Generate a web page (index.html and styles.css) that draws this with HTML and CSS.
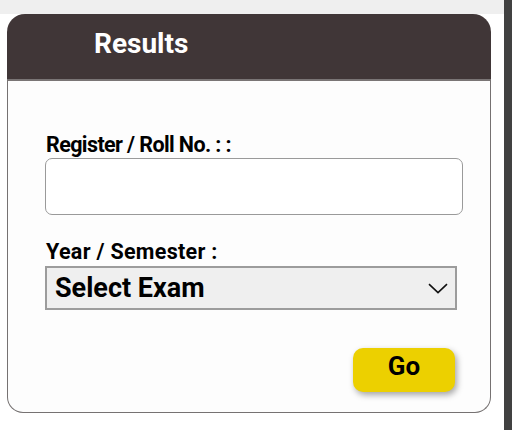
FILE: index.html
```html
<!DOCTYPE html>
<html lang="en">
<head>
<meta charset="utf-8">
<title>Results</title>
<link rel="stylesheet" href="styles.css">
</head>
<body>
<div class="page">
  <main class="main">
    <div class="topbar"></div>
    <section class="card">
      <header class="card-header">
        <h1 class="card-title">Results</h1>
      </header>
      <form class="card-body">
        <label class="field-label label-roll" for="roll">Register / Roll No. : :</label>
        <input class="text-input" id="roll" type="text">
        <label class="field-label label-year" for="exam">Year / Semester :</label>
        <div class="select-box">
          <select class="select" id="exam">
            <option>Select Exam</option>
          </select>
          <svg class="chevron" width="20" height="11" viewBox="0 0 20 11" aria-hidden="true">
            <path d="M1 1.2 L10 9.6 L19 1.2" fill="none" stroke="#111" stroke-width="1.6"/>
          </svg>
        </div>
        <div class="actions">
          <button class="go-btn" type="button">Go</button>
        </div>
      </form>
    </section>
  </main>
  <div class="scrollbar"></div>
</div>
</body>
</html>
```
FILE: styles.css
```css
html, body {
  margin: 0;
  padding: 0;
  background: #ffffff;
  font-family: Roboto, "Liberation Sans", Arial, sans-serif;
}

.page {
  display: flex;
  width: 512px;
  height: 430px;
  overflow: hidden;
}

.main {
  flex: 1;
  display: flex;
  flex-direction: column;
}

.scrollbar {
  width: 8px;
  background: #414141;
}

.topbar {
  height: 14px;
  background: #efefef;
}

.card {
  margin-left: 7px;
  width: 484px;
  display: flex;
  flex-direction: column;
}

.card-header {
  background: #403637;
  height: 65px;
  border-radius: 18px 18px 0 0;
  padding-left: 87px;
  display: flex;
  align-items: flex-start;
}

.card-title {
  margin: 0;
  padding-top: 13px;
  font-size: 28px;
  line-height: 33px;
  font-weight: 700;
  color: #ffffff;
}

.card-body {
  margin: 0;
  border: 1px solid #767272;
  border-top: 2px solid #7a7575;
  border-radius: 0 0 16px 16px;
  background: #fdfdfd;
  padding: 52px 0 19px 37px;
  display: flex;
  flex-direction: column;
  align-items: flex-start;
  height: 334px;
  box-sizing: border-box;
}

.field-label {
  display: block;
  font-size: 21.5px;
  line-height: 24px;
  font-weight: 700;
  color: #000000;
  padding-left: 1px;
  margin-bottom: 1px;
}

.label-roll {
  letter-spacing: -0.6px;
}

.label-year {
  letter-spacing: 0.3px;
  margin-top: 25px;
  margin-bottom: 2px;
}

.text-input {
  width: 418px;
  height: 57px;
  box-sizing: border-box;
  border: 1.5px solid #9a9a9a;
  border-radius: 7px;
  background: #ffffff;
  margin: 0;
  font-size: 20px;
  font-family: inherit;
}

.select-box {
  width: 412px;
  height: 44px;
  box-sizing: border-box;
  border: 2px solid #9c9c9c;
  background: #efefef;
  display: flex;
  align-items: center;
  padding-right: 7px;
}

.select {
  flex: 1;
  appearance: none;
  -webkit-appearance: none;
  border: none;
  background: transparent;
  font-family: inherit;
  font-size: 27px;
  font-weight: 700;
  color: #000000;
  padding: 0 0 0 8px;
  margin: 0;
  height: 40px;
  outline: none;
}

.chevron {
  display: block;
  margin-top: 1px;
}

.actions {
  align-self: stretch;
  display: flex;
  justify-content: flex-end;
  padding-right: 35px;
  margin-top: 38px;
}

.go-btn {
  width: 102px;
  height: 44px;
  border: none;
  border-radius: 10px;
  background: #ecd000;
  color: #000000;
  font-family: inherit;
  font-size: 26px;
  font-weight: 700;
  line-height: 30px;
  box-shadow: 2px 3px 6px rgba(0, 0, 0, 0.35);
  padding: 0 0 8px 0;
  cursor: pointer;
}
```
